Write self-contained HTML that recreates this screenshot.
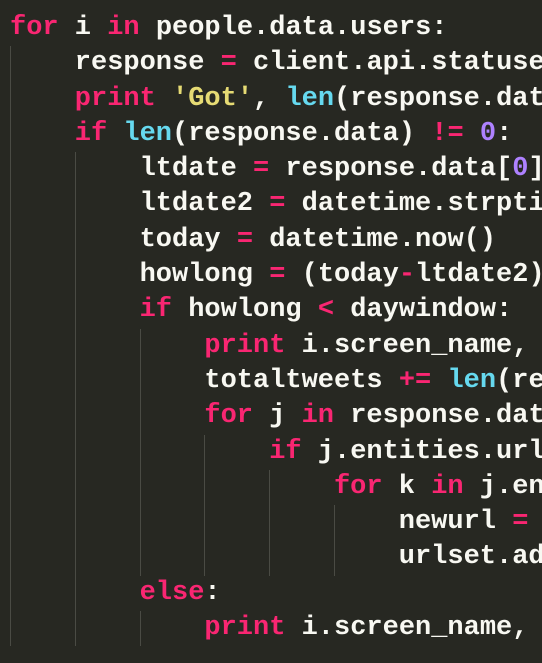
<!DOCTYPE html>
<html><head><style>
html,body{margin:0;padding:0;background:#272822;width:542px;height:663px;overflow:hidden}
.w{position:absolute;left:0;top:0;width:542px;height:663px;overflow:hidden}
pre{margin:0;position:absolute;left:10px;top:11px;font-family:"Liberation Mono",monospace;font-size:27px;line-height:35.3px;color:#f8f8f2;white-space:pre;font-weight:bold}
.k{color:#f92672}.b{color:#66d9ef}.s{color:#e6db74}.n{color:#ae81ff}
.g{display:inline-block;width:4ch;box-shadow:inset 1px 0 0 #4a4b44;height:35.3px;vertical-align:top}
</style></head><body><div class="w">
<pre><span class="k">for</span> i <span class="k">in</span> people.data.users:
<span class="g"></span>response <span class="k">=</span> client.api.statuses
<span class="g"></span><span class="k">print</span> <span class="s">'Got'</span>, <span class="b">len</span>(response.data
<span class="g"></span><span class="k">if</span> <span class="b">len</span>(response.data) <span class="k">!=</span> <span class="n">0</span>:
<span class="g"></span><span class="g"></span>ltdate <span class="k">=</span> response.data[<span class="n">0</span>]
<span class="g"></span><span class="g"></span>ltdate2 <span class="k">=</span> datetime.strptime
<span class="g"></span><span class="g"></span>today <span class="k">=</span> datetime.now()
<span class="g"></span><span class="g"></span>howlong <span class="k">=</span> (today<span class="k">-</span>ltdate2)
<span class="g"></span><span class="g"></span><span class="k">if</span> howlong <span class="k">&lt;</span> daywindow:
<span class="g"></span><span class="g"></span><span class="g"></span><span class="k">print</span> i.screen_name,
<span class="g"></span><span class="g"></span><span class="g"></span>totaltweets <span class="k">+=</span> <span class="b">len</span>(re
<span class="g"></span><span class="g"></span><span class="g"></span><span class="k">for</span> j <span class="k">in</span> response.dat
<span class="g"></span><span class="g"></span><span class="g"></span><span class="g"></span><span class="k">if</span> j.entities.url
<span class="g"></span><span class="g"></span><span class="g"></span><span class="g"></span><span class="g"></span><span class="k">for</span> k <span class="k">in</span> j.en
<span class="g"></span><span class="g"></span><span class="g"></span><span class="g"></span><span class="g"></span><span class="g"></span>newurl <span class="k">=</span>
<span class="g"></span><span class="g"></span><span class="g"></span><span class="g"></span><span class="g"></span><span class="g"></span>urlset.ad
<span class="g"></span><span class="g"></span><span class="k">else</span>:
<span class="g"></span><span class="g"></span><span class="g"></span><span class="k">print</span> i.screen_name,</pre>
</div></body></html>
